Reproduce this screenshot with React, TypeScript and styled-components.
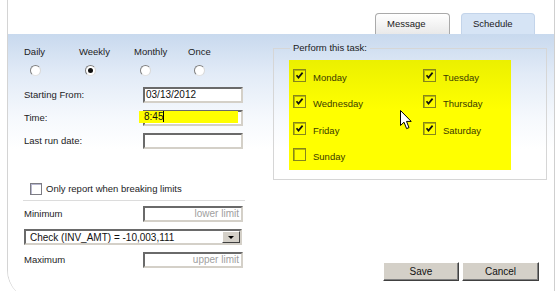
import React from 'react';
import styled, { createGlobalStyle } from 'styled-components';

const GlobalStyle = createGlobalStyle`
  html, body {
    margin: 0;
    padding: 0;
    background: #fff;
    overflow: hidden;
  }
  body {
    font-family: "Liberation Sans", Arial, sans-serif;
    font-size: 9.5px;
    color: #1c1c24;
  }
`;

const Frame = styled.div`
  margin-left: 7px;
  width: 546px;
  height: 300px;
  border-left: 1px solid #d4d4d4;
  border-right: 1px solid #cfcfcf;
  border-bottom-left-radius: 30px;
  display: flex;
  flex-direction: column;
  overflow: hidden;
`;

const TabBar = styled.div`
  height: 34px;
  display: flex;
  justify-content: flex-end;
  align-items: flex-end;
  gap: 11px;
  padding-right: 19px;
`;

const Tab = styled.div<{ $active?: boolean }>`
  width: ${p => (p.$active ? 74 : 75)}px;
  height: 21px;
  box-sizing: border-box;
  padding-left: 11px;
  line-height: 20px;
  border: 1px solid ${p => (p.$active ? '#c3d4ea' : '#aaaaaa')};
  border-bottom: none;
  border-radius: 4px 4px 0 0;
  background: ${p => (p.$active ? '#d6e4f5' : 'linear-gradient(#ffffff, #e9e9e9)')};
  color: #1a1a22;
`;

const Panel = styled.div`
  flex: 1;
  display: flex;
  background: linear-gradient(#c8d9ee 0px, #e2ebf7 40px, #f6f9fd 85px, #ffffff 115px);
`;

const LeftCol = styled.div`
  width: 249px;
  padding: 12px 0 0 16px;
`;

const RadioRow = styled.div`
  display: grid;
  grid-template-columns: 55px 55px 54px 55px;
`;

const RadioOption = styled.div`
  display: flex;
  flex-direction: column;
  align-items: flex-start;
  line-height: 12px;
`;

const Radio = styled.span<{ $checked?: boolean }>`
  width: 11px;
  height: 11px;
  box-sizing: border-box;
  margin: 7px 0 0 6px;
  border-radius: 50%;
  border: 1px solid;
  border-color: #7f7f7f #d8d8d8 #e2e2e2 #7f7f7f;
  background: #fff;
  display: flex;
  align-items: center;
  justify-content: center;
  &::after {
    content: '';
    width: 5px;
    height: 5px;
    border-radius: 50%;
    background: #111;
    display: ${p => (p.$checked ? 'block' : 'none')};
  }
`;

const FormGrid = styled.div<{ $top: number }>`
  display: grid;
  grid-template-columns: 119px 100px;
  row-gap: 7px;
  align-items: center;
  margin-top: ${p => p.$top}px;
`;

const Label = styled.span`
  line-height: 12px;
`;

const TextBox = styled.div<{ $placeholder?: boolean }>`
  position: relative;
  height: 16px;
  box-sizing: border-box;
  border: 2px solid;
  border-color: #6a6a6a #d4d0c8 #d4d0c8 #6a6a6a;
  background: #fff;
  padding: 0 2px 0 1px;
  line-height: 12px;
  font-size: 10px;
  text-align: ${p => (p.$placeholder ? 'right' : 'left')};
  color: ${p => (p.$placeholder ? '#a0a0a0' : '#111')};
`;

const Highlight = styled.span`
  position: absolute;
  left: -6px;
  top: -1px;
  width: 94px;
  height: 12px;
  padding-left: 5px;
  background: #ffff00;
  line-height: 12px;
  color: #111;
`;

const Caret = styled.span`
  display: inline-block;
  width: 1px;
  height: 11px;
  background: #000;
  vertical-align: -2px;
`;

const CheckRow = styled.div`
  display: flex;
  align-items: center;
  margin: 34px 0 0 6px;
  gap: 4px;
  line-height: 12px;
`;

const PlainBox = styled.span`
  width: 12px;
  height: 12px;
  box-sizing: border-box;
  border: 1px solid #7c7c84;
  box-shadow: inset 1px 1px 0 #b8b8d0;
  background: #fff;
`;

const Separator = styled.div`
  width: 222px;
  height: 1px;
  margin: 5px 0 0 -1px;
  background: #dcdcdc;
`;

const Select = styled.div`
  grid-column: 1 / span 2;
  width: 218px;
  height: 16px;
  box-sizing: border-box;
  border: 2px solid;
  border-color: #6a6a6a #d4d0c8 #d4d0c8 #6a6a6a;
  background: #fff;
  display: flex;
  align-items: center;
  justify-content: space-between;
  padding-left: 4px;
  font-size: 10px;
  color: #111;
`;

const DropButton = styled.span`
  width: 18px;
  height: 12px;
  box-sizing: border-box;
  background: #d4d0c8;
  border: 1px solid;
  border-color: #fff #404040 #404040 #fff;
  display: flex;
  align-items: center;
  justify-content: center;
  &::after {
    content: '';
    border-left: 3px solid transparent;
    border-right: 3px solid transparent;
    border-top: 3px solid #000;
  }
`;

const RightCol = styled.div`
  flex: 1;
  display: flex;
  flex-direction: column;
  padding: 8px 7px 19px 0;
`;

const TaskSet = styled.fieldset`
  margin: 0;
  height: 138px;
  box-sizing: border-box;
  border: 1px solid #d6d6d6;
  padding: 6px 0 0 15px;
`;

const Legend = styled.legend`
  margin-left: 1px;
  padding: 0 3px;
  line-height: 12px;
  color: #1a1a22;
`;

const YellowBox = styled.div`
  position: relative;
  width: 222px;
  height: 110px;
  box-sizing: border-box;
  background: linear-gradient(#ebf000, #ffff00 45%);
  display: grid;
  grid-template-columns: 130px 1fr;
  grid-auto-rows: 26.3px;
  padding: 9px 4px 0;
`;

const Day = styled.div`
  display: flex;
  align-items: flex-start;
  gap: 7px;
  line-height: 12px;
  color: #3a3a00;
`;

const DayBox = styled.span`
  width: 13px;
  height: 13px;
  box-sizing: border-box;
  border: 1px solid #86861c;
  box-shadow: inset 1px 1px 0 #b9b900;
  display: flex;
  align-items: center;
  justify-content: center;
`;

const DayText = styled.span`
  margin-top: 3px;
`;

const Cursor = styled.svg`
  position: absolute;
  left: 111px;
  top: 50px;
`;

const ButtonRow = styled.div`
  margin-top: auto;
  display: flex;
  justify-content: flex-end;
  gap: 3px;
  padding-right: 8px;
`;

const Button = styled.button<{ $w: number }>`
  width: ${p => p.$w}px;
  height: 19px;
  box-sizing: border-box;
  padding: 0;
  background: #d4d0c8;
  border: 1px solid;
  border-color: #ffffff #404040 #404040 #ffffff;
  box-shadow: inset -1px -1px 0 #808080;
  font-family: "Liberation Sans", Arial, sans-serif;
  font-size: 10px;
  color: #111;
`;

const Tick = () => (
  <svg width="9" height="9" viewBox="0 0 9 9">
    <path d="M1.5 4.2 L3.5 6.6 L7.6 1.6" fill="none" stroke="#111" strokeWidth="1.7" />
  </svg>
);

const days = [
  ['Monday', true],
  ['Tuesday', true],
  ['Wednesday', true],
  ['Thursday', true],
  ['Friday', true],
  ['Saturday', true],
  ['Sunday', false],
] as const;

const App = () => (
  <>
    <GlobalStyle />
    <Frame>
      <TabBar>
        <Tab>Message</Tab>
        <Tab $active>Schedule</Tab>
      </TabBar>
      <Panel>
        <LeftCol>
          <RadioRow>
            {['Daily', 'Weekly', 'Monthly', 'Once'].map(f => (
              <RadioOption key={f}>
                {f}
                <Radio $checked={f === 'Weekly'} />
              </RadioOption>
            ))}
          </RadioRow>
          <FormGrid $top={11}>
            <Label>Starting From:</Label>
            <TextBox>03/13/2012</TextBox>
            <Label>Time:</Label>
            <TextBox>
              <Highlight>
                8:45<Caret />
              </Highlight>
            </TextBox>
            <Label>Last run date:</Label>
            <TextBox />
          </FormGrid>
          <CheckRow>
            <PlainBox />
            Only report when breaking limits
          </CheckRow>
          <Separator />
          <FormGrid $top={5}>
            <Label>Minimum</Label>
            <TextBox $placeholder>lower limit</TextBox>
            <Select>
              Check (INV_AMT) = -10,003,111
              <DropButton />
            </Select>
            <Label>Maximum</Label>
            <TextBox $placeholder>upper limit</TextBox>
          </FormGrid>
        </LeftCol>
        <RightCol>
          <TaskSet>
            <Legend>Perform this task:</Legend>
            <YellowBox>
              {days.map(([name, on]) => (
                <Day key={name}>
                  <DayBox>{on && <Tick />}</DayBox>
                  <DayText>{name}</DayText>
                </Day>
              ))}
              <Cursor width="13" height="20" viewBox="0 0 13 20">
                <path
                  d="M0.5 0.5 L0.5 15.5 L4 12.2 L6.6 18.6 L9 17.6 L6.5 11.4 L11.2 11.4 Z"
                  fill="#fff"
                  stroke="#000"
                  strokeWidth="1"
                />
              </Cursor>
            </YellowBox>
          </TaskSet>
          <ButtonRow>
            <Button $w={76}>Save</Button>
            <Button $w={77}>Cancel</Button>
          </ButtonRow>
        </RightCol>
      </Panel>
    </Frame>
  </>
);

export default App;
